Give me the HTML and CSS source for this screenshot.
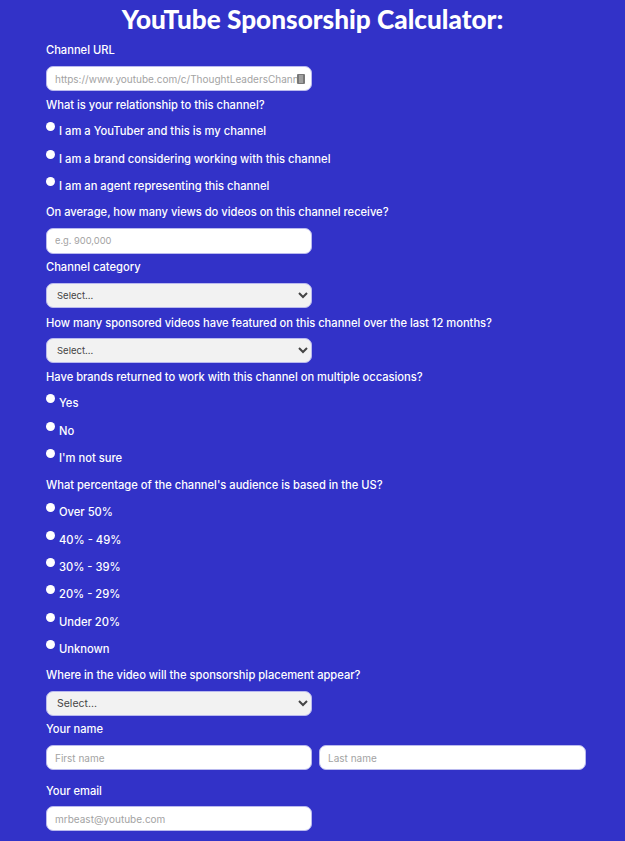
FILE: index.html
```html
<!DOCTYPE html>
<html lang="en">
<head>
<meta charset="utf-8">
<title>YouTube Sponsorship Calculator</title>
<link rel="stylesheet" href="styles.css">
</head>
<body>
<h1 class="title">YouTube Sponsorship Calculator:</h1>
<form class="form">
  <div class="field">
    <label class="label">Channel URL</label>
    <div class="input-wrap">
      <input class="control url" type="text" placeholder="https://www.youtube.com/c/ThoughtLeadersChannel">
      <svg class="autofill" viewBox="0 0 8 10" aria-hidden="true"><rect width="8" height="10" rx="1" fill="#777"/><path d="M2 2h4M2 4h4M2 6h4M2 8h4" stroke="#ddd" stroke-width=".8"/></svg>
    </div>
  </div>
  <fieldset class="group group-relationship">
    <div class="label">What is your relationship to this channel?</div>
    <label class="radio"><input type="radio" name="rel"><span>I am a YouTuber and this is my channel</span></label>
    <label class="radio"><input type="radio" name="rel"><span>I am a brand considering working with this channel</span></label>
    <label class="radio"><input type="radio" name="rel"><span>I am an agent representing this channel</span></label>
  </fieldset>
  <div class="field views">
    <label class="label">On average, how many views do videos on this channel receive?</label>
    <input class="control tall" type="text" placeholder="e.g. 900,000">
  </div>
  <div class="field compact">
    <label class="label">Channel category</label>
    <select class="control select"><option>Select...</option></select>
  </div>
  <div class="field sponsored">
    <label class="label">How many sponsored videos have featured on this channel over the last 12 months?</label>
    <select class="control select"><option>Select...</option></select>
  </div>
  <fieldset class="group group-returning">
    <div class="label">Have brands returned to work with this channel on multiple occasions?</div>
    <label class="radio"><input type="radio" name="ret"><span>Yes</span></label>
    <label class="radio"><input type="radio" name="ret"><span>No</span></label>
    <label class="radio"><input type="radio" name="ret"><span>I'm not sure</span></label>
  </fieldset>
  <fieldset class="group group-audience">
    <div class="label">What percentage of the channel's audience is based in the US?</div>
    <label class="radio"><input type="radio" name="us"><span>Over 50%</span></label>
    <label class="radio"><input type="radio" name="us"><span>40% - 49%</span></label>
    <label class="radio"><input type="radio" name="us"><span>30% - 39%</span></label>
    <label class="radio"><input type="radio" name="us"><span>20% - 29%</span></label>
    <label class="radio"><input type="radio" name="us"><span>Under 20%</span></label>
    <label class="radio"><input type="radio" name="us"><span>Unknown</span></label>
  </fieldset>
  <div class="field placement">
    <label class="label">Where in the video will the sponsorship placement appear?</label>
    <select class="control select select-large"><option>Select...</option></select>
  </div>
  <div class="field compact">
    <label class="label">Your name</label>
    <div class="name-row">
      <input class="control" type="text" placeholder="First name">
      <input class="control" type="text" placeholder="Last name">
    </div>
  </div>
  <div class="field email">
    <label class="label">Your email</label>
    <input class="control" type="email" placeholder="mrbeast@youtube.com">
  </div>
</form>
</body>
</html>
```

FILE: styles.css
```css
* { box-sizing: border-box; }
html, body { height: 841px; overflow: hidden; }
body {
  margin: 0;
  background: #3232c8;
  color: #fff;
  font-family: "Inter", "Open Sans", sans-serif;
}
.title {
  margin: 0;
  height: 42px;
  padding-top: 4px;
  text-align: center;
  font-family: "Lato", sans-serif;
  font-size: 26.2px;
  line-height: 30px;
  font-weight: 900;
}
.form {
  padding: 0 39px 0 46px;
}
.field { display: block; }
.label {
  display: block;
  height: 16px;
  font-size: 11.15px;
  line-height: 16px;
  font-weight: 500;
  white-space: nowrap;
}
.field > .label { margin-bottom: 8px; }
.control {
  display: block;
  width: 266px;
  height: 25px;
  padding: 0 8px;
  border: 1px solid #b9b9ee;
  border-radius: 7px;
  background: #fff;
  color: #555;
  font-family: "Inter", sans-serif;
  font-size: 10px;
  outline: none;
}
.control::placeholder { color: #a3a3a3; opacity: 1; }
.tall { height: 26px; font-size: 9.3px; }
.url { padding-right: 13px; }
.input-wrap { position: relative; width: 266px; }
.autofill {
  position: absolute;
  top: 8px;
  right: 7px;
  width: 8px;
  height: 10px;
}
.select {
  background: #f2f2f2;
  padding-left: 6px;
  font-size: 9.5px;
  color: #444;
}
.select-large { font-size: 10.5px; }
.group {
  margin: 0;
  padding: 0;
  border: 0;
}
.radio {
  display: flex;
  align-items: flex-start;
  height: 27.4px;
  font-size: 11.2px;
  font-weight: 500;
  line-height: 16px;
}
.radio input {
  appearance: none;
  flex: none;
  width: 9px;
  height: 9px;
  margin: 1px 4px 0 0;
  border-radius: 50%;
  background: #fff;
}
.radio span { position: relative; top: 2px; }
.group-relationship { margin-top: 6px; }
.group-relationship > .label { margin-bottom: 8.2px; }
.views { margin-top: .4px; }
.compact { margin-top: 5px; }
.sponsored { margin-top: 7px; }
.sponsored > .label { margin-bottom: 7px; }
.group-returning { margin-top: 6px; }
.group-returning > .label { margin-bottom: 8.6px; }
.group-audience { margin-top: 1px; }
.group-audience > .label { margin-bottom: 9.6px; }
.placement { margin-top: 1px; }
.name-row {
  display: flex;
  gap: 7px;
}
.name-row .control { flex: none; width: 266px; }
.name-row .control + .control { width: 267px; }
.email { margin-top: 13px; }
.email > .label { margin-bottom: 7px; }
```
